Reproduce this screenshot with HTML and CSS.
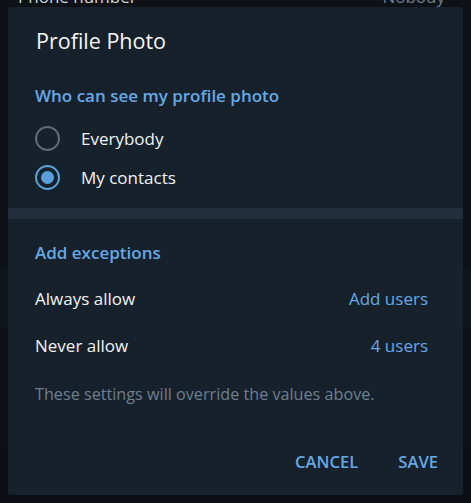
FILE: index.html
```html
<!DOCTYPE html>
<html>
<head>
<meta charset="utf-8">
<link rel="stylesheet" href="styles.css">
</head>
<body>
<div class="backdrop">
  <div class="bg-row bg-top"><span>Phone number</span><span>Nobody</span></div>
  <div class="bg-band b2"></div>
  <div class="bg-band b3"></div>
</div>
<div class="dialog">
  <h1 class="title">Profile Photo</h1>
  <div class="section">
    <div class="section-head">Who can see my profile photo</div>
    <div class="radio-row">
      <span class="radio"></span><span class="label">Everybody</span>
    </div>
    <div class="radio-row">
      <span class="radio checked"></span><span class="label">My contacts</span>
    </div>
  </div>
  <div class="divider"></div>
  <div class="section">
    <div class="section-head second">Add exceptions</div>
    <div class="ex-row"><span class="label">Always allow</span><span class="link">Add users</span></div>
    <div class="ex-row"><span class="label">Never allow</span><span class="link">4 users</span></div>
    <div class="note">These settings will override the values above.</div>
  </div>
  <div class="actions">
    <span class="btn">CANCEL</span>
    <span class="btn">SAVE</span>
  </div>
</div>
</body>
</html>
```
FILE: styles.css
```css
* { box-sizing: border-box; }
html, body { margin: 0; padding: 0; }
body {
  width: 471px;
  height: 503px;
  background: #0e1217;
  font-family: "Open Sans", "Noto Sans", sans-serif;
  overflow: hidden;
  position: relative;
}
.backdrop {
  position: absolute;
  inset: 0;
}
.bg-row {
  display: flex;
  justify-content: space-between;
  padding: 0 26px 0 18px;
  color: #d0d6dc;
  font-size: 17px;
  line-height: 20px;
  margin-top: -13px;
}
.bg-row span:last-child { color: #6d7f8f; }
.bg-band {
  position: absolute;
  left: 0;
  right: 0;
}
.b2 { top: 267px; height: 60px; background: #10151b; }
.b3 { top: 446px; height: 57px; background: #0c1014; }
.dialog {
  position: absolute;
  left: 8px;
  top: 7px;
  width: 455px;
  height: 488px;
  background: #17212b;
  border-radius: 3px;
  display: flex;
  flex-direction: column;
}
.title {
  margin: 0;
  padding: 20px 0 0 28px;
  font-size: 21.5px;
  font-weight: 400;
  color: #f5f5f5;
  line-height: 28px;
}
.section { padding: 0 35px 0 27px; }
.section-head {
  color: #64a9e6;
  font-weight: 600;
  font-size: 17px;
  line-height: 22px;
  margin-top: 30px;
  margin-bottom: 12px;
}
.section-head.second { margin-top: 23px; margin-bottom: 11px; }
.radio-row {
  display: flex;
  align-items: center;
  height: 39px;
}
.radio {
  width: 25px;
  height: 25px;
  border-radius: 50%;
  border: 2px solid #5e6b78;
  margin-right: 21px;
  position: relative;
  flex: none;
}
.radio.checked { border-color: #5a9fdc; }
.radio.checked::after {
  content: "";
  position: absolute;
  left: 4px;
  top: 4px;
  width: 13px;
  height: 13px;
  border-radius: 50%;
  background: #5a9fdc;
}
.label { color: #f1f3f5; font-size: 17px; }
.divider {
  height: 11px;
  background: #232e3c;
  margin-top: 11px;
}
.ex-row {
  display: flex;
  justify-content: space-between;
  align-items: center;
  height: 47px;
}
.ex-row .link { color: #64a9e6; font-size: 17px; }
.note {
  color: #6d7f8f;
  font-size: 16.2px;
  line-height: 22px;
  margin-top: 14px;
}
.actions {
  margin-top: auto;
  display: flex;
  justify-content: flex-end;
  gap: 40px;
  padding: 0 25px 22px 0;
}
.btn {
  color: #64a9e6;
  font-weight: 600;
  font-size: 16.6px;
  line-height: 22px;
}
```
